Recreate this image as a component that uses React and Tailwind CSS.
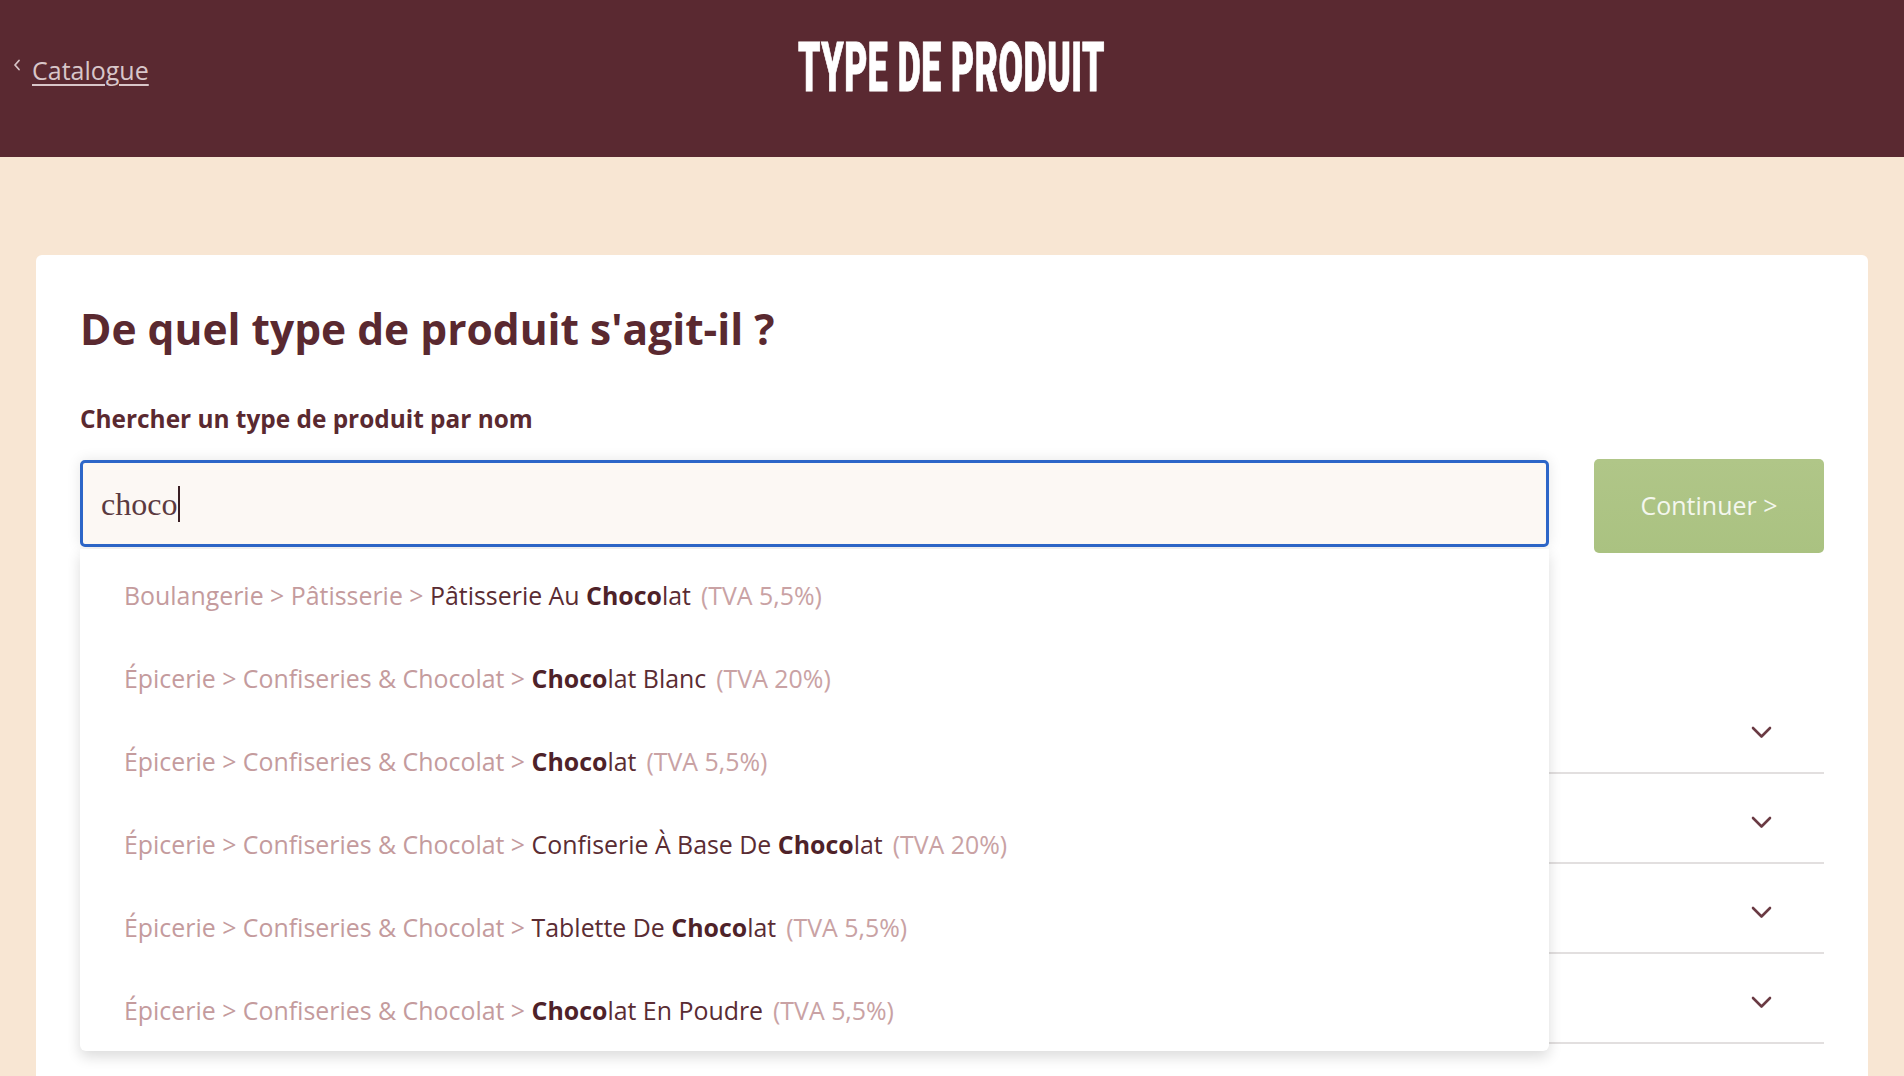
import React from "react";

const rows = [
  { prefix: "Boulangerie > Pâtisserie > ", before: "Pâtisserie Au ", after: "lat", tva: "(TVA 5,5%)" },
  { prefix: "Épicerie > Confiseries & Chocolat > ", before: "", after: "lat Blanc", tva: "(TVA 20%)" },
  { prefix: "Épicerie > Confiseries & Chocolat > ", before: "", after: "lat", tva: "(TVA 5,5%)" },
  { prefix: "Épicerie > Confiseries & Chocolat > ", before: "Confiserie À Base De ", after: "lat", tva: "(TVA 20%)" },
  { prefix: "Épicerie > Confiseries & Chocolat > ", before: "Tablette De ", after: "lat", tva: "(TVA 5,5%)" },
  { prefix: "Épicerie > Confiseries & Chocolat > ", before: "", after: "lat En Poudre", tva: "(TVA 5,5%)" },
];

const categories = ["boulangerie", "boissons", "cremerie", "epicerie", "fruits"];

function ChevronDown() {
  return (
    <svg width="21" height="13" viewBox="0 0 21 13" fill="none">
      <polyline points="2,2 10.5,10.5 19,2" stroke="#6a3a43" strokeWidth="2.6" strokeLinecap="round" strokeLinejoin="round" />
    </svg>
  );
}

export default function App() {
  return (
    <div className="h-[1076px] overflow-hidden bg-[#f8e6d3] font-['Open_Sans',sans-serif]">
      <header className="grid h-[157px] grid-cols-[1fr_auto_1fr] items-start bg-[#5a2931]">
        <div className="flex items-start pl-[13px] pt-[58px]">
          <svg width="8" height="12" viewBox="0 0 8 12" fill="none" className="mt-[1px]">
            <polyline points="6,1.5 2,6 6,10.5" stroke="#d6c3c6" strokeWidth="1.8" strokeLinecap="round" strokeLinejoin="round" />
          </svg>
          <a className="ml-[11px] text-[25px] leading-[25px] text-[#d8c6c9] underline decoration-[1.5px] underline-offset-[4px]">
            Catalogue
          </a>
        </div>
        <div className="pt-[33px]">
          <h1 className="inline-block origin-center scale-x-[0.516] font-['Roboto',sans-serif] text-[69px] font-black leading-[69px] tracking-[1px] text-white [-webkit-text-stroke:1px_white]">
            TYPE DE PRODUIT
          </h1>
        </div>
        <div />
      </header>

      <main className="mx-[36px] mt-[98px] rounded-[6px] bg-white px-[44px] pt-[48px]">
        <h2 className="text-[42.5px] font-bold leading-[52px] text-[#5a2930]">De quel type de produit s'agit-il ?</h2>
        <p className="mt-[48px] text-[24.4px] font-bold leading-[32px] text-[#5a2930]">Chercher un type de produit par nom</p>

        <div className="mt-[24px] flex items-start gap-[45px]">
          <div className="relative z-10 mt-[1px] flex-1">
            <div className="flex h-[87px] items-center rounded-[5px] border-[3px] border-[#2d66c8] bg-[#fcf8f4] pl-[18px] shadow-[0_0_14px_rgba(0,0,0,0.10)]">
              <span className="font-['Liberation_Serif',serif] text-[32px] leading-[36px] text-[#5b3a40]">choco</span>
              <span className="ml-[1px] h-[36px] w-[2px] bg-[#3a1f24]" />
            </div>
            <ul className="absolute left-0 right-0 top-[calc(100%+2px)] rounded-b-[6px] bg-white pt-[4px] shadow-[0_6px_14px_rgba(0,0,0,0.14)]">
              {rows.map((r, i) => (
                <li key={i} className="flex h-[83px] items-center whitespace-pre pl-[44px] text-[24.9px] leading-[34px]">
                  <span className="text-[#c49b9d]">{r.prefix}</span>
                  <span className="text-[#5a2c33]">{r.before}</span>
                  <span className="font-bold text-[#4e2229]">Choco</span>
                  <span className="text-[#5a2c33]">{r.after}</span>
                  <span className="ml-[10px] text-[#c9a2a4]">{r.tva}</span>
                </li>
              ))}
            </ul>
          </div>
          <button className="h-[94px] w-[230px] rounded-[5px] bg-gradient-to-b from-[#b0c688] to-[#aac281] text-[25px] text-[#f4f7ee]">
            Continuer &gt;
          </button>
        </div>

        <div className="mt-[131px]">
          {categories.map((c) => (
            <div key={c} className="flex h-[90px] items-start justify-end border-b-2 border-[#e2dfdf] pr-[52px] pt-[42px]">
              <ChevronDown />
            </div>
          ))}
        </div>
      </main>
    </div>
  );
}
